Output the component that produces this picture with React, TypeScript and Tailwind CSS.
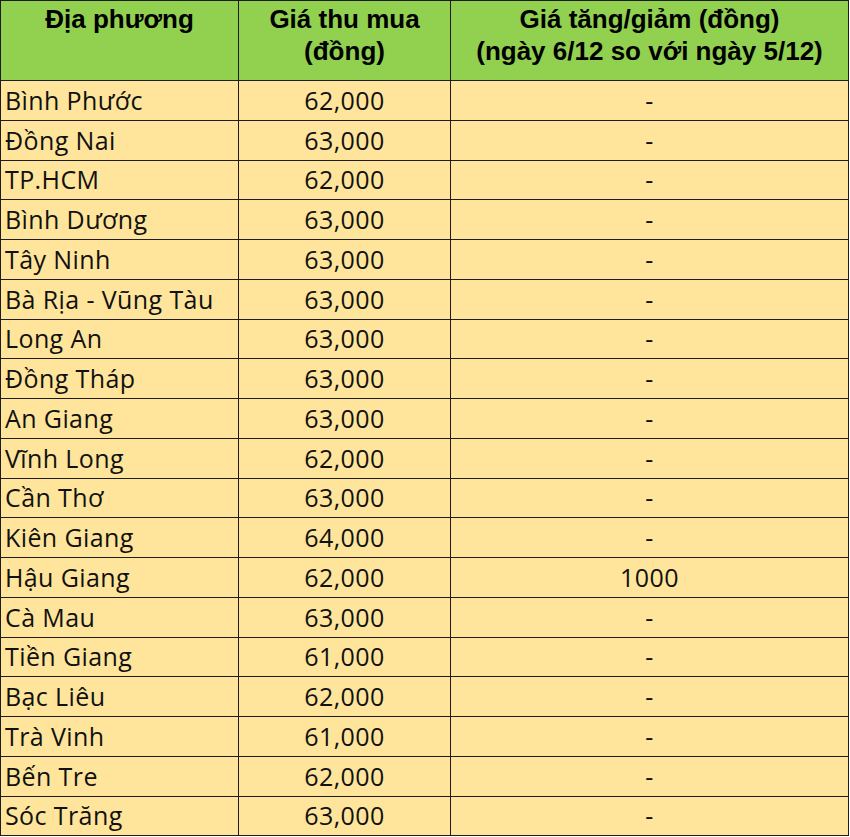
import React from 'react';

const rows: [string, string, string][] = [
    ['Bình Phước', '62,000', '-'],
    ['Đồng Nai', '63,000', '-'],
    ['TP.HCM', '62,000', '-'],
    ['Bình Dương', '63,000', '-'],
    ['Tây Ninh', '63,000', '-'],
    ['Bà Rịa - Vũng Tàu', '63,000', '-'],
    ['Long An', '63,000', '-'],
    ['Đồng Tháp', '63,000', '-'],
    ['An Giang', '63,000', '-'],
    ['Vĩnh Long', '62,000', '-'],
    ['Cần Thơ', '63,000', '-'],
    ['Kiên Giang', '64,000', '-'],
    ['Hậu Giang', '62,000', '1000'],
    ['Cà Mau', '63,000', '-'],
    ['Tiền Giang', '61,000', '-'],
    ['Bạc Liêu', '62,000', '-'],
    ['Trà Vinh', '61,000', '-'],
    ['Bến Tre', '62,000', '-'],
    ['Sóc Trăng', '63,000', '-'],
];

export default function App() {
    return (
        <div className="w-[850px] h-[837px] bg-white">
            <table className="w-[849px] table-fixed border-collapse border border-[#1c1c1c]">
                <colgroup>
                    <col className="w-[238px]" />
                    <col className="w-[212px]" />
                    <col />
                </colgroup>
                <thead>
                    <tr className="h-[80px] bg-[#92d050] text-[26px] font-bold leading-[32px] text-black font-['Liberation_Sans',Arial,sans-serif]">
                        <th className="border border-[#1c1c1c] align-top pt-[2px] font-bold">Địa phương</th>
                        <th className="border border-[#1c1c1c] align-top pt-[2px] font-bold">
                            Giá thu mua
                            <br />
                            (đồng)
                        </th>
                        <th className="border border-[#1c1c1c] align-top pt-[2px] font-bold">
                            Giá tăng/giảm (đồng)
                            <br />
                            (ngày 6/12 so với ngày 5/12)
                        </th>
                    </tr>
                </thead>
                <tbody className="bg-[#ffe59b] text-[25px] tracking-[0.4px] text-[#111] font-['Open_Sans','Noto_Sans',sans-serif]">
                    {rows.map(([place, price, change]) => (
                        <tr key={place} className="h-[39.75px]">
                            <td className="border border-[#1c1c1c] pl-[4px] py-0 leading-none whitespace-nowrap">{place}</td>
                            <td className="border border-[#1c1c1c] text-center py-0 leading-none">{price}</td>
                            <td className="border border-[#1c1c1c] text-center py-0 leading-none">{change}</td>
                        </tr>
                    ))}
                </tbody>
            </table>
        </div>
    );
}
